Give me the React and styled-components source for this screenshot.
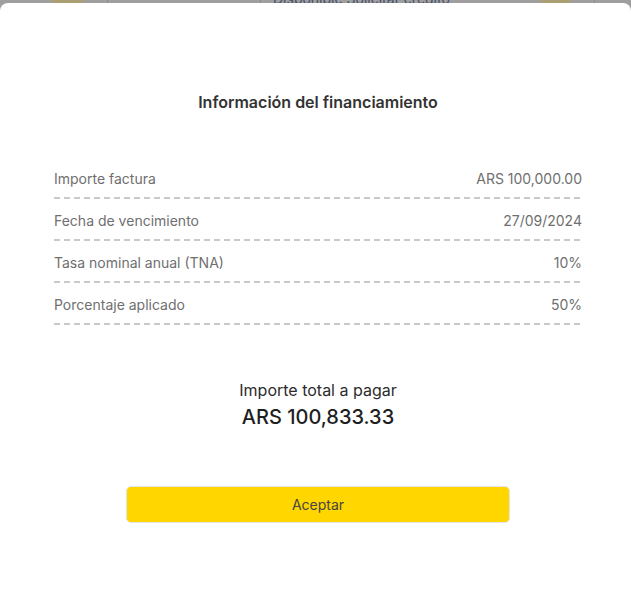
import React from 'react';
import styled, { createGlobalStyle } from 'styled-components';

const GlobalStyle = createGlobalStyle`
  html, body {
    margin: 0;
    padding: 0;
    background: #9f9f9f;
    font-family: Inter, "Noto Sans", "Liberation Sans", sans-serif;
  }
`;

const Page = styled.div`
  position: relative;
  width: 631px;
  height: 601px;
  overflow: hidden;
  background: #9f9f9f;
`;

/* dimmed page content showing behind the overlay */
const Behind = styled.div`
  position: absolute;
  inset: 0;
  pointer-events: none;
`;

const Blob = styled.div`
  position: absolute;
  top: -40px;
  left: ${(p) => p.$left}px;
  width: ${(p) => p.$size}px;
  height: 46px;
  border-radius: 50%;
  background: #ab9f72;
`;

const Divider = styled.div`
  position: absolute;
  top: 0;
  left: ${(p) => p.$left}px;
  width: 1px;
  height: 10px;
  background: #8c8c8c;
`;

const BehindText = styled.div`
  position: absolute;
  top: -10px;
  left: 273px;
  font-size: 14px;
  line-height: 17px;
  color: #46506a;
  white-space: nowrap;
`;

const Modal = styled.div`
  position: relative;
  margin-top: 3px;
  height: 598px;
  background: #ffffff;
  border-radius: 8px 8px 0 0;
  padding: 89px 49px 0 54px;
  box-sizing: border-box;
  display: flex;
  flex-direction: column;
`;

const Title = styled.h2`
  margin: 0;
  font-size: 16px;
  line-height: 20px;
  font-weight: 600;
  color: #333333;
  text-align: center;
`;

const List = styled.div`
  margin-top: 45px;
  display: flex;
  flex-direction: column;
`;

const Row = styled.div`
  display: flex;
  justify-content: space-between;
  align-items: center;
  padding: 12px 0 10px;
  font-size: 14px;
  line-height: 20px;
  color: #6f6f6f;
  background-image: linear-gradient(to right, #c9c9c9 0 6px, transparent 6px 10px);
  background-size: 10px 2px;
  background-repeat: repeat-x;
  background-position: left bottom;
`;

const Total = styled.div`
  margin-top: 54px;
  display: flex;
  flex-direction: column;
  align-items: center;
`;

const TotalLabel = styled.div`
  font-size: 16px;
  line-height: 22px;
  color: #2c2c2c;
`;

const TotalAmount = styled.div`
  margin-top: 3px;
  font-size: 20px;
  line-height: 26px;
  font-weight: 500;
  color: #1f1f1f;
`;

const Button = styled.button`
  align-self: center;
  margin-top: 56px;
  width: 384px;
  height: 37px;
  border: 1px solid #e4e4e4;
  border-radius: 5px;
  background: #ffd600;
  font-family: inherit;
  font-size: 14px;
  color: #444444;
  cursor: pointer;
`;

const rows = [
  ['Importe factura', 'ARS 100,000.00'],
  ['Fecha de vencimiento', '27/09/2024'],
  ['Tasa nominal anual (TNA)', '10%'],
  ['Porcentaje aplicado', '50%'],
];

export default function App() {
  return (
    <>
      <GlobalStyle />
      <Page>
        <Behind>
          <Blob $left={41} $size={53} />
          <Blob $left={530} $size={51} />
          <Divider $left={107} />
          <Divider $left={260} />
          <Divider $left={594} />
          <BehindText>Disponible Solicitar crédito</BehindText>
        </Behind>
        <Modal>
          <Title>Información del financiamiento</Title>
          <List>
            {rows.map(([label, value]) => (
              <Row key={label}>
                <span>{label}</span>
                <span>{value}</span>
              </Row>
            ))}
          </List>
          <Total>
            <TotalLabel>Importe total a pagar</TotalLabel>
            <TotalAmount>ARS 100,833.33</TotalAmount>
          </Total>
          <Button>Aceptar</Button>
        </Modal>
      </Page>
    </>
  );
}
